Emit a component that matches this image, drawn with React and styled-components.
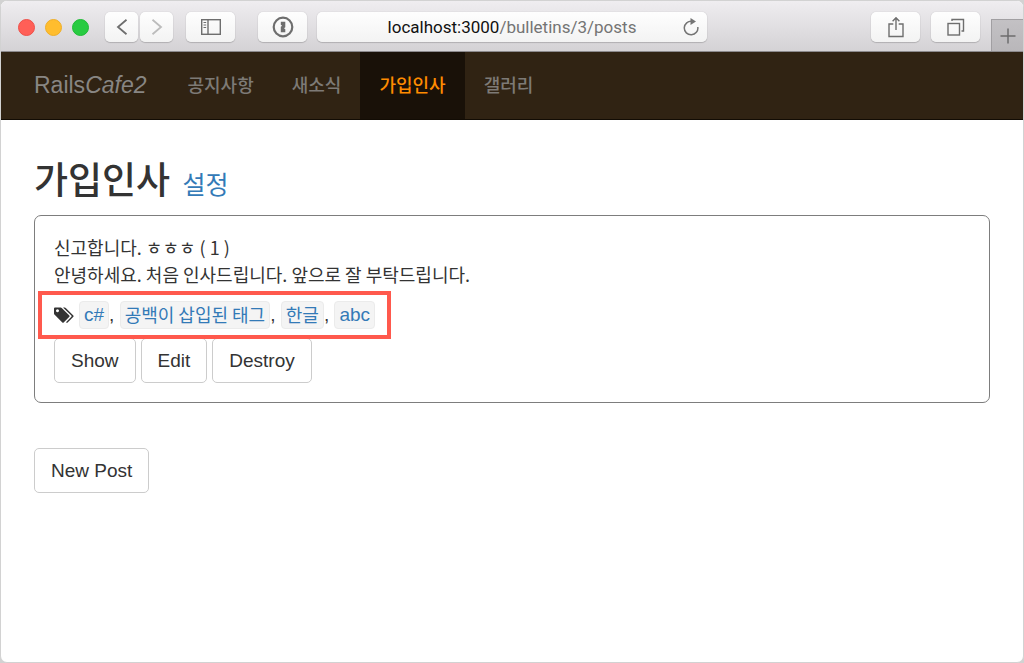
import React from "react";
import styled, { createGlobalStyle } from "styled-components";

const latin = `"Liberation Sans", "Noto Sans CJK KR", sans-serif`;
const korean = `"Noto Sans CJK KR", "Liberation Sans", sans-serif`;

const GlobalStyle = createGlobalStyle`
  *, *::before, *::after { box-sizing: border-box; }
  body { margin: 0; background: #d2d2d2; color: #333; font-family: ${latin}; }
  a { text-decoration: none; }
  button { font: inherit; cursor: pointer; }
`;

const BrowserWindow = styled.div`
  min-height: 100vh;
  border: 1px solid #d2d2d2;
  border-radius: 7px;
  overflow: hidden;
  background: #fff;
`;

const Toolbar = styled.header`
  display: grid;
  grid-template-columns: 1fr minmax(200px, 390px) 1fr;
  height: 51px;
  padding-top: 11px;
  border-bottom: 1px solid #8c8a8d;
  background: linear-gradient(#efedf0, #d4d2d5);
`;

const ToolGroup = styled.div`
  display: flex;
  align-items: flex-start;
`;

const LeftTools = styled(ToolGroup)`
  gap: 13px;
  padding-left: 17px;
`;

const RightTools = styled(ToolGroup)`
  justify-content: flex-end;
  gap: 11px;
`;

const Lights = styled.div`
  display: flex;
  align-items: center;
  gap: 10px;
  height: 30px;
  margin-right: 3px;
`;

const Light = styled.button`
  width: 17px;
  height: 17px;
  padding: 0;
  border: 1px solid ${(p) => p.$edge};
  border-radius: 50%;
  background: ${(p) => p.$fill};
`;

const History = styled.div`
  display: flex;
  gap: 2px;
`;

const ToolButton = styled.button`
  display: flex;
  align-items: center;
  justify-content: center;
  width: ${(p) => (p.$narrow ? "33px" : "49px")};
  height: 30px;
  padding: 0;
  border: 0;
  border-radius: 5px;
  background: linear-gradient(#fefefe, #f3f3f3);
  box-shadow: 0 0 1px rgba(0, 0, 0, 0.25), 0 1px 1px rgba(0, 0, 0, 0.16);
  color: ${(p) => (p.$faded ? "#bcbcbc" : "#6e6e6e")};
`;

const VaultButton = styled(ToolButton)`
  margin-left: 10px;
`;

const AddressBar = styled.div`
  display: grid;
  grid-template-columns: 32px 1fr 32px;
  height: 30px;
  border-radius: 5px;
  background: linear-gradient(#fefefe, #f3f3f3);
  box-shadow: 0 0 1px rgba(0, 0, 0, 0.25), 0 1px 1px rgba(0, 0, 0, 0.16);
`;

const Address = styled.button`
  grid-column: 2;
  padding: 0;
  border: 0;
  background: none;
  color: #747474;
  font-family: Roboto, "Liberation Sans", sans-serif;
  font-size: 17px;
  line-height: 30px;
  white-space: nowrap;
`;

const Host = styled.span`
  color: #111;
`;

const Reload = styled.button`
  display: flex;
  align-items: center;
  justify-content: center;
  padding: 0;
  border: 0;
  background: none;
  color: #747474;
`;

const NewTab = styled.button`
  display: flex;
  align-items: center;
  justify-content: center;
  align-self: flex-end;
  width: 32px;
  height: 32px;
  padding: 0;
  border: 0;
  border-top: 1px solid #a19fa2;
  border-left: 1px solid #a19fa2;
  background: linear-gradient(#c3c1c4, #b9b7ba);
  color: #6d6c6e;
`;

const Navbar = styled.nav`
  display: flex;
  height: 68px;
  padding: 0 33px;
  border-bottom: 1px solid #120c04;
  background: #302313;
`;

const Brand = styled.a`
  margin-right: 22px;
  color: #888683;
  font-size: 23px;
  line-height: 66px;
`;

const NavLink = styled.a`
  padding: 0 19px;
  background: ${(p) => (p.$active ? "#191108" : "transparent")};
  color: ${(p) => (p.$active ? "#ff8c00" : "#7d7a76")};
  font-family: ${korean};
  font-size: 18px;
  font-weight: 500;
  line-height: 64px;
`;

const Main = styled.main`
  padding: 38px 33px;
`;

const Title = styled.h1`
  margin: 0 0 17px;
  font-family: ${korean};
  font-size: 37px;
  font-weight: 500;
  line-height: 40px;
`;

const SettingsLink = styled.a`
  margin-left: 4px;
  color: #337ab7;
  font-size: 25px;
  font-weight: 400;
  line-height: 25px;
`;

const Card = styled.article`
  margin-bottom: 45px;
  padding: 18px 19px 19px;
  border: 1px solid #7d7d7d;
  border-radius: 7px;
`;

const Text = styled.p`
  margin: 0;
  font-family: ${korean};
  font-size: 18px;
  line-height: 27px;
`;

const TagRow = styled.div`
  position: relative;
  display: flex;
  align-items: center;
  width: fit-content;
  height: 28px;
  margin: 13px 0 9px;
  font-size: 19px;

  &::after {
    content: "";
    position: absolute;
    inset: -10px -16px;
    border: 4px solid #ff594d;
    pointer-events: none;
  }
`;

const TagIcon = styled.svg`
  width: 20px;
  height: 17px;
  margin-right: 5px;
`;

const Separator = styled.span`
  white-space: pre;
`;

const Tag = styled.a`
  height: 28px;
  padding: 0 4px;
  border: 1px solid #ebebeb;
  border-radius: 4px;
  background: #f4f4f4;
  color: #337ab7;
  font-family: ${(p) => (p.$korean ? korean : latin)};
  font-size: ${(p) => (p.$korean ? "18px" : "19px")};
  line-height: ${(p) => (p.$korean ? "24px" : "26px")};
`;

const Actions = styled.div`
  display: flex;
  gap: 5px;
`;

const Button = styled.button`
  height: 45px;
  padding: 0 16px;
  border: 1px solid #ccc;
  border-radius: 5px;
  background: #fff;
  color: #333;
  font-size: 19px;
`;

const Icon = ({ w, h, children, stroke = 1.4 }) => (
  <svg
    width={w}
    height={h}
    viewBox={`0 0 ${w} ${h}`}
    fill="none"
    stroke="currentColor"
    strokeWidth={stroke}
    aria-hidden="true"
  >
    {children}
  </svg>
);

const navItems = ["공지사항", "새소식", "가입인사", "갤러리"];

const tags = [
  { name: "c#" },
  { name: "공백이 삽입된 태그", korean: true },
  { name: "한글", korean: true },
  { name: "abc" },
];

export default function App() {
  return (
    <BrowserWindow>
      <GlobalStyle />
      <Toolbar>
        <LeftTools>
          <Lights>
            <Light $fill="#ff5f57" $edge="#ee5049" aria-label="Close" />
            <Light $fill="#ffbd2e" $edge="#efae28" aria-label="Minimize" />
            <Light $fill="#28cb41" $edge="#20bb36" aria-label="Zoom" />
          </Lights>
          <History>
            <ToolButton $narrow aria-label="Back">
              <Icon w={12} h={18} stroke={1.8}>
                <path d="M10.500 1.800 2 9l8.500 7.200" />
              </Icon>
            </ToolButton>
            <ToolButton $narrow $faded aria-label="Forward">
              <Icon w={12} h={18} stroke={1.8}>
                <path d="M1.500 1.800 10 9l-8.500 7.200" />
              </Icon>
            </ToolButton>
          </History>
          <ToolButton aria-label="Sidebar">
            <Icon w={20} h={16} stroke={1.4}>
              <rect x="0.7" y="0.7" width="18.600" height="14.600" />
              <path d="M7 .7v14.600" />
              <path d="M2.500 3.500h2.700M2.500 6h2.700M2.500 8.500h2.700" strokeWidth="1" />
            </Icon>
          </ToolButton>
          <VaultButton aria-label="Passwords">
            <Icon w={22} h={22} stroke={2.2}>
              <circle cx="11" cy="11" r="9.300" />
              <path
                d="M8.800 5.800h4.500v5.400l-1.300 1 1.300 1v3H8.800v-5.400l1.300-1-1.300-1z"
                fill="currentColor"
                stroke="none"
              />
            </Icon>
          </VaultButton>
        </LeftTools>
        <AddressBar>
          <Address>
            <Host>localhost:3000</Host>/bulletins/3/posts
          </Address>
          <Reload aria-label="Reload">
            <Icon w={16} h={18} stroke={1.5}>
              <path d="M9 3.300A6.800 6.800 0 1 0 14.800 9" />
              <path d="M7.500 0v7L13 3.500z" fill="currentColor" stroke="none" />
            </Icon>
          </Reload>
        </AddressBar>
        <RightTools>
          <ToolButton aria-label="Share">
            <Icon w={16} h={22}>
              <path d="M5.300 8H1v12.500h14V8h-4.300M8 14V2M4.600 5.300 8 1.700l3.400 3.600" />
            </Icon>
          </ToolButton>
          <ToolButton aria-label="Show tabs">
            <Icon w={18} h={18}>
              <rect x="1" y="5.500" width="11.500" height="11.500" />
              <path d="M5 3V1.500h11.500V13H14.500" />
            </Icon>
          </ToolButton>
          <NewTab aria-label="New tab">
            <Icon w={16} h={16} stroke={1.5}>
              <path d="M8 .5v15M.5 8h15" />
            </Icon>
          </NewTab>
        </RightTools>
      </Toolbar>
      <Navbar>
        <Brand href="#">
          Rails<i>Cafe2</i>
        </Brand>
        {navItems.map((item) => (
          <NavLink key={item} href="#" $active={item === "가입인사"}>
            {item}
          </NavLink>
        ))}
      </Navbar>
      <Main>
        <Title>
          가입인사 <SettingsLink href="#">설정</SettingsLink>
        </Title>
        <Card>
          <Text>신고합니다. ㅎㅎㅎ ( 1 )</Text>
          <Text>안녕하세요. 처음 인사드립니다. 앞으로 잘 부탁드립니다.</Text>
          <TagRow>
            <TagIcon viewBox="0 0 60 50" fill="#333" aria-hidden="true">
              <path
                fillRule="evenodd"
                d="M3 1h17q2 0 4 2l22 22q2 2 0 4L29 46q-2 2-4 0L2 23q-2-2-2-4V4q0-3 3-3zM10.500 6.500a4.500 4.500 0 1 0 .01 0z"
              />
              <path d="M27 1h5q2 0 4 2l22 22q2 2 0 4L41 46q-2 2-4 0l-1-1 16-16q2-2 0-4z" />
            </TagIcon>
            {tags.map((tag, i) => (
              <React.Fragment key={tag.name}>
                {i > 0 && <Separator>, </Separator>}
                <Tag href="#" $korean={tag.korean}>
                  {tag.name}
                </Tag>
              </React.Fragment>
            ))}
          </TagRow>
          <Actions>
            <Button>Show</Button>
            <Button>Edit</Button>
            <Button>Destroy</Button>
          </Actions>
        </Card>
        <Button>New Post</Button>
      </Main>
    </BrowserWindow>
  );
}
